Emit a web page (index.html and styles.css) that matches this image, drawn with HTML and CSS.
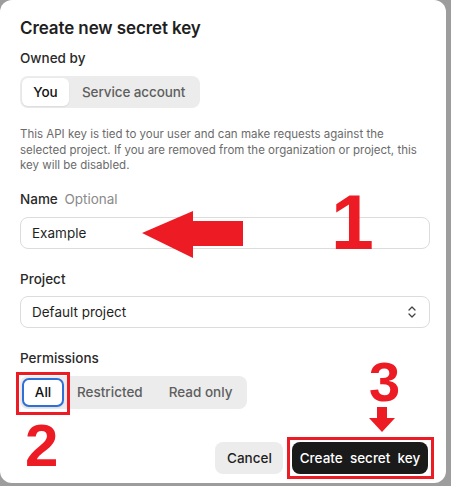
FILE: index.html
```html
<!DOCTYPE html>
<html>
<head>
<meta charset="utf-8">
<link rel="stylesheet" href="styles.css">
</head>
<body>
<div class="card">
  <h1 class="title">Create new secret key</h1>
  <div class="label first">Owned by</div>
  <div class="seg seg-owner">
    <span class="opt active">You</span>
    <span class="opt">Service account</span>
  </div>
  <p class="desc">This API key is tied to your user and can make requests against the selected project. If you are removed from the organization or project, this key will be disabled.</p>

  <div class="label name">Name <span class="optional">Optional</span></div>
  <div class="input">Example</div>

  <div class="label gap">Project</div>
  <div class="input select">
    <span>Default project</span>
    <svg class="chev" width="10" height="14" viewBox="0 0 10 14"><path d="M2 5 L5 2 L8 5 M2 9 L5 12 L8 9" fill="none" stroke="#444" stroke-width="1.3" stroke-linecap="round" stroke-linejoin="round"/></svg>
  </div>

  <div class="label gap">Permissions</div>
  <div class="seg seg-perm">
    <span class="opt active focus">All</span>
    <span class="opt">Restricted</span>
    <span class="opt">Read only</span>
  </div>

  <div class="actions">
    <button class="btn cancel">Cancel</button>
    <button class="btn primary">Create&nbsp; secret&nbsp; key</button>
  </div>

  <div class="mark num n1">1</div>
  <svg class="mark arrow-left" width="102" height="48" viewBox="0 0 102 48"><polygon points="0,22 51,0 51,10 101,10 101,35 51,35 51,47" fill="#ed1c24"/></svg>
  <div class="mark box box-all"></div>
  <div class="mark num n2">2</div>
  <div class="mark num n3">3</div>
  <svg class="mark arrow-down" width="28" height="26" viewBox="0 0 28 26"><polygon points="9,0 19,0 19,11 27,11 14,25 1,11 9,11" fill="#ed1c24"/></svg>
  <div class="mark box box-create"></div>
</div>
</body>
</html>
```
FILE: styles.css
```css
html, body {
  margin: 0;
  padding: 0;
}
body {
  background: #9d9d9d;
  width: 451px;
  height: 486px;
  overflow: hidden;
  font-family: "Inter", "Liberation Sans", sans-serif;
  color: #1f1f1f;
}
.card {
  position: relative;
  box-sizing: border-box;
  width: 446px;
  height: 483px;
  background: #fff;
  border-radius: 12px;
  padding: 16px 20px 0 20px;
}
.title {
  margin: 0;
  font-size: 17px;
  line-height: 24px;
  font-weight: 600;
  letter-spacing: -0.1px;
}
.label {
  font-size: 13.5px;
  line-height: 20px;
  font-weight: 500;
  color: #2a2a2a;
  margin-top: 20px;
}
.label.first {
  margin-top: 8px;
}
.label.name {
  margin-top: 15px;
}
.optional {
  font-weight: 400;
  color: #8a8a8a;
  margin-left: 3px;
}
.seg {
  display: flex;
  width: fit-content;
  background: #ececec;
  border-radius: 8px;
  padding: 2px;
  margin-top: 8px;
  font-size: 13.5px;
  font-weight: 500;
}
.seg .opt {
  display: flex;
  align-items: center;
  height: 28px;
  padding: 0 13px;
  color: #5e5e5e;
  border-radius: 6px;
  white-space: nowrap;
}
.seg-owner .opt {
  letter-spacing: -0.1px;
}
.seg .opt.active {
  background: #fff;
  color: #111;
  box-shadow: 0 1px 2px rgba(0,0,0,0.08);
  letter-spacing: 0;
}
.seg-owner .opt.active {
  width: 47px;
  box-sizing: border-box;
  justify-content: center;
  padding: 0;
}
.seg-perm .opt {
  height: 29px;
}
.seg-perm .opt.active {
  width: 42px;
  box-sizing: border-box;
  justify-content: center;
  padding: 0;
  border: 2px solid #2f6fd6;
  border-radius: 7px;
}
.desc {
  margin: 19px 0 0 0;
  font-size: 11.5px;
  line-height: 15.5px;
  color: #6b6b6b;
}
.label + .input {
  margin-top: 8px;
}
.input {
  box-sizing: border-box;
  height: 32px;
  width: 410px;
  border: 1px solid #dcdcdc;
  border-radius: 8px;
  padding: 0 11px;
  display: flex;
  align-items: center;
  font-size: 13.5px;
  color: #1f1f1f;
}
.select {
  justify-content: space-between;
  padding-right: 12px;
}
.label + .select {
  margin-top: 7px;
}
.chev {
  display: block;
}
.actions {
  display: flex;
  justify-content: flex-end;
  gap: 9px;
  margin-top: 33px;
  width: 408px;
}
.btn {
  height: 32px;
  border: none;
  border-radius: 8px;
  font-family: "Inter", "Liberation Sans", sans-serif;
  font-size: 13.5px;
  font-weight: 500;
  padding: 0 12px;
}
.cancel {
  background: #ececec;
  color: #1f1f1f;
  width: 68px;
}
.primary {
  background: #1a1a1a;
  color: #fff;
  width: 136px;
  padding: 0;
}
.mark {
  position: absolute;
}
.num {
  font-family: "Liberation Sans", sans-serif;
  font-weight: 700;
  color: #ed1c24;
  line-height: 1;
}
.n1 {
  left: 331px;
  top: 184px;
  font-size: 77px;
}
.n2 {
  left: 25px;
  top: 416px;
  font-size: 60px;
}
.n3 {
  left: 369px;
  top: 354px;
  font-size: 56px;
}
.arrow-left {
  left: 142px;
  top: 211px;
}
.arrow-down {
  left: 368px;
  top: 407px;
}
.box {
  border: 3px solid #ed1c24;
  box-sizing: border-box;
}
.box-all {
  left: 16px;
  top: 372px;
  width: 54px;
  height: 43px;
}
.box-create {
  left: 287px;
  top: 437px;
  width: 147px;
  height: 42px;
}
```
